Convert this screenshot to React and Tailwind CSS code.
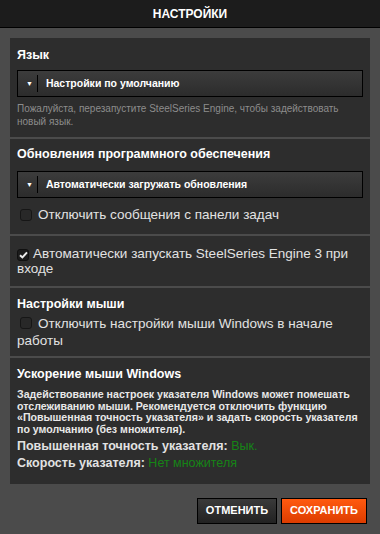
import React from "react";

const font = { fontFamily: '"Liberation Sans", Arial, sans-serif' };

const Dropdown = ({ label, className = "" }) => (
  <div className={`flex h-[27px] items-center border border-black bg-gradient-to-b from-[#3c3c3c] to-[#2c2c2c] ${className}`}>
    <span className="ml-[8px] text-[7px] leading-none text-white">▼</span>
    <span className="ml-[4px] h-[17px] w-px bg-black"></span>
    <span className="ml-[8px] text-[10.5px] font-bold text-white">{label}</span>
  </div>
);

const Checkbox = ({ checked }) => (
  <span
    className={`inline-flex h-[12px] w-[12px] shrink-0 items-center justify-center rounded-[3px] border ${
      checked ? "border-[#101010] bg-[#1c1c1c]" : "border-[#161616] bg-[#282828]"
    }`}
  >
    {checked && (
      <svg width="9" height="8" viewBox="0 0 9 8">
        <path d="M1 4.2 L3.4 6.4 L8 1.4" stroke="#ececec" strokeWidth="2" fill="none" />
      </svg>
    )}
  </span>
);

const Section = ({ children, className = "" }) => (
  <div className={`bg-[#2d2d2d] px-[7px] ${className}`}>{children}</div>
);

export default function App() {
  return (
    <div className="h-[534px] w-[380px] overflow-hidden bg-[#4b4b4b]" style={font}>
      <div className="flex h-[28px] items-center justify-center border-b border-black bg-[#1c1c1c]">
        <span className="text-[12px] font-bold text-white">НАСТРОЙКИ</span>
      </div>

      <div className="mx-[10px] mt-[10px] flex flex-col gap-[2px]">
        <Section className="pt-[9px] pb-[9px]">
          <div className="text-[12.5px] font-bold leading-[16px] text-white">Язык</div>
          <Dropdown label="Настройки по умолчанию" className="mt-[7px]" />
          <p className="mt-[5px] text-[10px] leading-[13px] text-[#8c8c8c]">
            Пожалуйста, перезапустите SteelSeries Engine, чтобы задействовать новый язык.
          </p>
        </Section>

        <Section className="pt-[7px] pb-[11px]">
          <div className="text-[12.5px] font-bold leading-[16px] text-white">Обновления программного обеспечения</div>
          <Dropdown label="Автоматически загружать обновления" className="mt-[9px]" />
          <label className="mt-[8px] flex items-center gap-[6px] pl-[3px] text-[13.5px] leading-[17px] text-[#e2e2e2]">
            <Checkbox />
            Отключить сообщения с панели задач
          </label>
        </Section>

        <Section className="pt-[10px] pb-[10px]">
          <div className="text-[13.5px] leading-[15px] text-[#e2e2e2]">
            <span className="mr-[4px] inline-flex translate-y-[1px]">
              <Checkbox checked />
            </span>
            Автоматически запускать SteelSeries Engine 3 при входе
          </div>
        </Section>

        <Section className="pt-[8px] pb-[7px]">
          <div className="text-[12.5px] font-bold leading-[16px] text-white">Настройки мыши</div>
          <div className="mt-[3px] text-[13.5px] leading-[17px] text-[#e2e2e2]">
            <span className="mr-[6px] ml-[3px] inline-flex translate-y-[1px]">
              <Checkbox />
            </span>
            Отключить настройки мыши Windows в начале работы
          </div>
        </Section>

        <Section className="pt-[8px] pb-[12px]">
          <div className="text-[12.5px] font-bold leading-[16px] text-white">Ускорение мыши Windows</div>
          <p className="mt-[7px] mr-[-4px] text-[10.6px] font-bold leading-[11.5px] text-[#e8e8e8]">
            Задействование настроек указателя Windows может помешать отслеживанию мыши. Рекомендуется отключить функцию «Повышенная точность указателя» и задать скорость указателя по умолчанию (без множителя).
          </p>
          <div className="mt-[2.5px] text-[12.5px] font-bold leading-[17px] text-[#e2e2e2]">
            Повышенная точность указателя: <span className="font-normal text-[#168416]">Вык.</span>
          </div>
          <div className="text-[12.5px] font-bold leading-[17px] text-[#e2e2e2]">
            Скорость указателя: <span className="font-normal text-[#168416]">Нет множителя</span>
          </div>
        </Section>
      </div>

      <div className="mr-[13px] mt-[14px] flex justify-end gap-[4px]">
        <button className="h-[26px] w-[80px] border border-black bg-gradient-to-b from-[#3a3a3a] to-[#222] text-[11px] font-bold text-white">
          ОТМЕНИТЬ
        </button>
        <button className="h-[26px] w-[86px] border border-black bg-gradient-to-b from-[#ff5a10] to-[#dd3c00] text-[11px] font-bold text-white">
          СОХРАНИТЬ
        </button>
      </div>
    </div>
  );
}
